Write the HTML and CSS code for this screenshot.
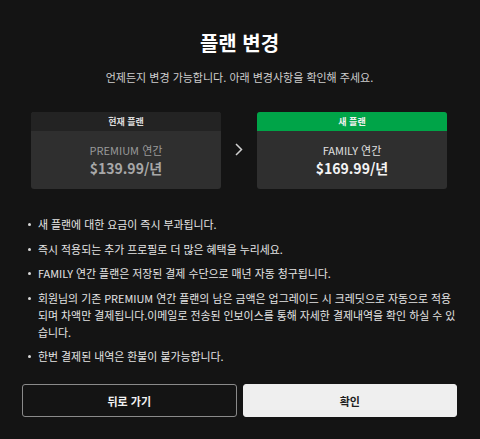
FILE: index.html
```html
<!DOCTYPE html>
<html lang="ko">
<head>
<meta charset="utf-8">
<title>플랜 변경</title>
<link rel="stylesheet" href="styles.css">
</head>
<body>
<div class="modal">
  <h1 class="title">플랜 변경</h1>
  <p class="subtitle">언제든지 변경 가능합니다. 아래 변경사항을 확인해 주세요.</p>
  <div class="plans">
    <div class="card">
      <div class="card-head">현재 플랜</div>
      <div class="card-body">
        <div class="plan-name">PREMIUM 연간</div>
        <div class="plan-price">$139.99/년</div>
      </div>
    </div>
    <div class="arrow">
      <svg width="8" height="13" viewBox="0 0 8 13"><polyline points="1,1 6.5,6.5 1,12" fill="none" stroke="#d0d0d0" stroke-width="1.5"/></svg>
    </div>
    <div class="card card-new">
      <div class="card-head">새 플랜</div>
      <div class="card-body">
        <div class="plan-name">FAMILY 연간</div>
        <div class="plan-price">$169.99/년</div>
      </div>
    </div>
  </div>
  <ul class="notes">
    <li>새 플랜에 대한 요금이 즉시 부과됩니다.</li>
    <li>즉시 적용되는 추가 프로필로 더 많은 혜택을 누리세요.</li>
    <li>FAMILY 연간 플랜은 저장된 결제 수단으로 매년 자동 청구됩니다.</li>
    <li>회원님의 기존 PREMIUM 연간 플랜의 남은 금액은 업그레이드 시 크레딧으로 자동으로 적용되며 차액만 결제됩니다.이메일로 전송된 인보이스를 통해 자세한 결제내역을 확인 하실 수 있습니다.</li>
    <li>한번 결제된 내역은 환불이 불가능합니다.</li>
  </ul>
  <div class="actions">
    <button class="btn btn-back">뒤로 가기</button>
    <button class="btn btn-ok">확인</button>
  </div>
</div>
</body>
</html>
```
FILE: styles.css
```css
html, body {
  margin: 0;
  padding: 0;
  background: #141414;
}
body {
  font-family: "Noto Sans CJK KR", "Noto Sans", sans-serif;
  color: #e6e6e6;
}
.modal {
  padding: 29px 23px 22px 22px;
}
.title {
  margin: 0;
  font-size: 20px;
  line-height: 28px;
  font-weight: 700;
  text-align: center;
  color: #ffffff;
}
.subtitle {
  margin: 12px 0 0;
  font-size: 11px;
  line-height: 16px;
  text-align: center;
  color: #cfcfcf;
}
.plans {
  margin: 27px 10px 0 9px;
  display: grid;
  grid-template-columns: 1fr 36px 1fr;
}
.card {
  border-radius: 3px;
  overflow: hidden;
  background: #2f2f2f;
}
.card-head {
  height: 19px;
  line-height: 19px;
  font-size: 9px;
  font-weight: 700;
  text-align: center;
  background: #232323;
  color: #dcdcdc;
}
.card-new .card-head {
  background: #00a448;
  color: #f2f2f2;
}
.card-body {
  padding: 11px 0;
  text-align: center;
}
.plan-name {
  font-size: 11px;
  line-height: 16px;
  color: #9a9a9a;
}
.plan-price {
  font-size: 14px;
  line-height: 20px;
  font-weight: 700;
  color: #a8a8a8;
}
.card-new .plan-name {
  color: #e0e0e0;
}
.card-new .plan-price {
  color: #f4f4f4;
}
.arrow {
  display: flex;
  align-items: center;
  justify-content: center;
  padding-bottom: 2px;
}
.notes {
  list-style: none;
  margin: 27px 0 0;
  padding: 0 0 0 6px;
  display: flex;
  flex-direction: column;
  gap: 7.5px;
}
.notes li {
  display: flex;
  font-size: 10.9px;
  line-height: 17px;
  color: #e4e4e4;
  word-break: break-all;
}
.notes li::before {
  content: "";
  flex: none;
  width: 3px;
  height: 3px;
  border-radius: 50%;
  background: #d8d8d8;
  margin: 7px 7px 0 0;
}
.actions {
  margin-top: 19px;
  display: grid;
  grid-template-columns: 1fr 1fr;
  gap: 6px;
}
.btn {
  height: 33px;
  border-radius: 3px;
  font-family: inherit;
  font-size: 11px;
  font-weight: 700;
  cursor: pointer;
}
.btn-back {
  background: transparent;
  border: 1px solid #8a8a8a;
  color: #f2f2f2;
}
.btn-ok {
  background: #efefef;
  border: 1px solid #efefef;
  color: #1e1e1e;
}
```
